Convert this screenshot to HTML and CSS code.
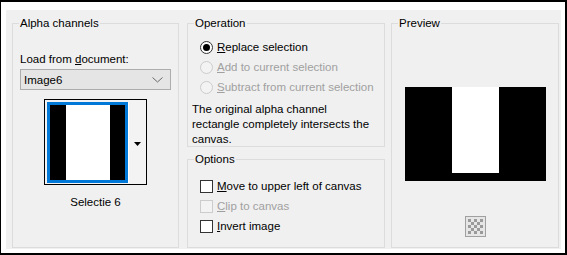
FILE: index.html
```html
<!DOCTYPE html>
<html>
<head>
<meta charset="utf-8">
<link rel="stylesheet" href="styles.css">
</head>
<body>
<div class="frame">
  <div class="dialog">
    <fieldset class="group alpha">
      <legend>Alpha channels</legend>
      <div class="label-load">Load from <u>d</u>ocument:</div>
      <div class="select">
        <span>Image6</span>
        <svg class="chev" width="11" height="6" viewBox="0 0 11 6"><path d="M0.5 0.5 L5.5 5 L10.5 0.5" fill="none" stroke="#6a6a6a" stroke-width="1"/></svg>
      </div>
      <div class="thumb-btn">
        <div class="thumb-sel">
          <div class="thumb-img"><i class="blk"></i><i class="wht"></i><i class="blk2"></i></div>
        </div>
        <div class="thumb-drop">
          <svg width="7" height="4" viewBox="0 0 7 4"><path d="M0 0 H7 L3.5 4 Z" fill="#000"/></svg>
        </div>
      </div>
      <div class="caption">Selectie 6</div>
    </fieldset>

    <div class="col">
      <fieldset class="group operation">
        <legend>Operation</legend>
        <div class="row"><span class="radio on"></span><span><u>R</u>eplace selection</span></div>
        <div class="row dis"><span class="radio"></span><span><u>A</u>dd to current selection</span></div>
        <div class="row dis"><span class="radio"></span><span><u>S</u>ubtract from current selection</span></div>
        <p class="desc">The original alpha channel<br>rectangle completely intersects the<br>canvas.</p>
      </fieldset>
      <fieldset class="group options">
        <legend>Options</legend>
        <div class="row"><span class="check"></span><span><u>M</u>ove to upper left of canvas</span></div>
        <div class="row dis"><span class="check"></span><span><u>C</u>lip to canvas</span></div>
        <div class="row"><span class="check"></span><span><u>I</u>nvert image</span></div>
      </fieldset>
    </div>

    <fieldset class="group preview">
      <legend>Preview</legend>
      <div class="pv"><div class="pv-white"></div></div>
      <div class="checker">
        <svg width="21" height="21" viewBox="0 0 21 21">
          <rect x="0.5" y="0.5" width="20" height="20" fill="#e6e6e6" stroke="#a0a0a0"/>
          <g fill="#9a9a9a">
            <rect x="3" y="3" width="3" height="3"/><rect x="9" y="3" width="3" height="3"/><rect x="15" y="3" width="3" height="3"/>
            <rect x="6" y="6" width="3" height="3"/><rect x="12" y="6" width="3" height="3"/>
            <rect x="3" y="9" width="3" height="3"/><rect x="9" y="9" width="3" height="3"/><rect x="15" y="9" width="3" height="3"/>
            <rect x="6" y="12" width="3" height="3"/><rect x="12" y="12" width="3" height="3"/>
            <rect x="3" y="15" width="3" height="3"/><rect x="9" y="15" width="3" height="3"/><rect x="15" y="15" width="3" height="3"/>
          </g>
        </svg>
      </div>
    </fieldset>
  </div>
</div>
</body>
</html>
```

FILE: styles.css
```css
* { box-sizing: border-box; }
html, body { margin: 0; padding: 0; background: #fff; }
body {
  font-family: "Liberation Sans", Arial, sans-serif;
  font-size: 11.5px;
  color: #000;
}
.frame {
  width: 567px;
  height: 255px;
  background: #fff;
  border-style: solid;
  border-color: #000;
  border-width: 2px 2px 2px 1px;
  padding: 8px 4px 4px 5px;
}
.dialog {
  width: 555px;
  height: 239px;
  background: #f0f0f0;
  padding: 6px 2px 1px 6px;
  display: flex;
  gap: 8px;
}
.group {
  margin: 0;
  padding: 0;
  border: 1px solid #dcdcdc;
  min-width: 0;
}
.group legend {
  margin-left: 6px;
  padding: 0 1px;
  line-height: 15px;
  height: 15px;
}
.alpha { width: 167px; height: 232px; }
.col { width: 198px; display: flex; flex-direction: column; gap: 5px; margin-right: -2px; }
.preview { width: 168px; height: 232px; }
.operation { height: 131px; }
.options { flex: 1; }

.label-load { margin: 21px 0 0 7px; line-height: 15px; }
.select {
  margin: 2px 0 0 7px;
  width: 151px;
  height: 21px;
  background: #e5e5e5;
  border: 1px solid #adadad;
  display: flex;
  align-items: center;
  justify-content: space-between;
  padding: 0 7px 0 3px;
}
.chev { display: block; }

.thumb-btn {
  margin: 9px 0 0 31px;
  width: 103px;
  height: 86px;
  border: 1px solid #000;
  background: #f3f3f3;
  display: flex;
  padding: 2px 0 0 2px;
}
.thumb-sel {
  width: 81px;
  height: 81px;
  border: 3px solid #0078d7;
  flex: none;
}
.thumb-img { display: flex; height: 100%; }
.thumb-img i { display: block; height: 100%; }
.thumb-img .blk { width: 16px; background: #000; }
.thumb-img .wht { width: 44px; background: #fff; }
.thumb-img .blk2 { width: 15px; background: #000; }
.thumb-drop {
  flex: 1;
  display: flex;
  align-items: center;
  justify-content: center;
  border-left: 1px solid #fff;
  margin-bottom: 1px;
}
.thumb-drop svg { display: block; margin-top: 2px; }
.caption { margin-top: 10px; text-align: center; line-height: 15px; padding-left: 0; }

.row {
  display: flex;
  align-items: center;
  height: 20px;
  padding-left: 12px;
  gap: 4px;
}
.operation .row:first-of-type { margin-top: 6px; }
.dis { color: #a0a0a0; }
.radio {
  width: 13px; height: 13px;
  border-radius: 50%;
  border: 1px solid #333;
  background: #fff;
  flex: none;
  display: flex; align-items: center; justify-content: center;
}
.radio.on::after {
  content: "";
  width: 7px; height: 7px; border-radius: 50%; background: #000;
}
.dis .radio { border-color: #cccccc; background: #f3f3f3; }
.desc { margin: 5px 0 0 4px; line-height: 15px; }

.options .row:first-of-type { margin-top: 9px; }
.check {
  width: 13px; height: 13px;
  border: 1px solid #333;
  background: #fff;
  flex: none;
}
.dis .check { border-color: #cccccc; background: #f3f3f3; }

.pv {
  margin: 56px auto 0;
  width: 141px;
  height: 94px;
  background: #000;
  padding-left: 47px;
}
.pv-white { width: 47px; height: 86px; background: #fff; }
.checker { margin: 35px auto 0; width: 21px; height: 21px; }
.checker svg { display: block; }
```
